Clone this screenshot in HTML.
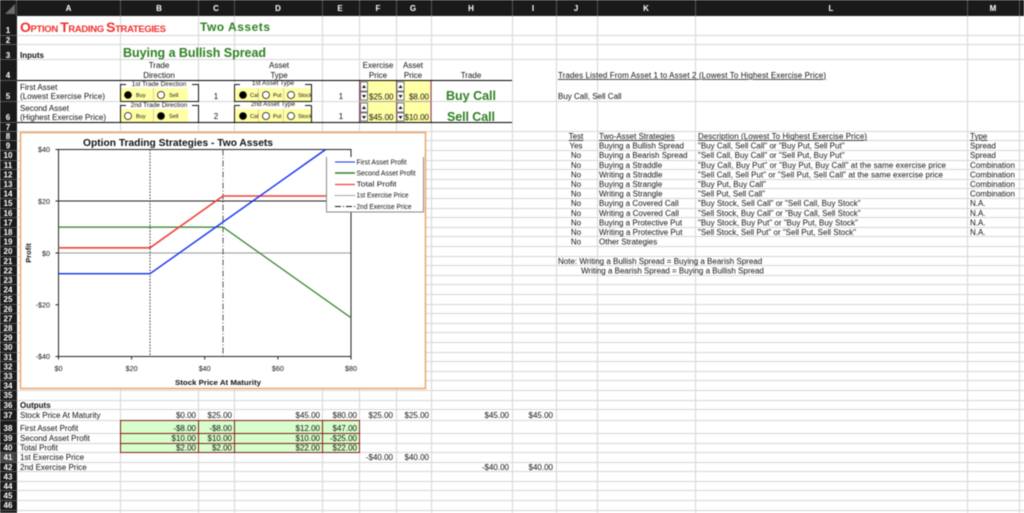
<!DOCTYPE html>
<html><head><meta charset="utf-8">
<style>
html,body{margin:0;padding:0;background:#fff;width:1024px;height:513px;overflow:hidden}
svg{display:block;filter:blur(.4px)}
text{font-family:"Liberation Sans",sans-serif;font-size:8px;fill:#111}
.h text{fill:#fff;font-weight:bold;font-size:8px;text-anchor:middle}
.m text,text.m{text-anchor:middle}
.e text,text.e{text-anchor:end}
.g{fill:#2e8022;font-weight:bold}
.c text{font-size:7.2px}
.s text{font-size:5.6px}
.t text{font-size:6.5px;text-anchor:middle}
.l text{font-size:7px}
</style></head><body>
<svg width="1024" height="513" viewBox="0 0 1024 513" xmlns="http://www.w3.org/2000/svg">
<rect width="1024" height="513" fill="#fff"/>
<path shape-rendering="crispEdges" fill="none" stroke="#d6d6d6" d="M120.5 16V513M198.5 16V513M234.5 16V513M322.5 16V513M359.5 16V513M396.5 16V513M431.5 16V513M512.5 16V513M556.5 16V513M597.5 16V513M695.5 16V513M967.5 16V513M1019.5 16V513
M17 35.5H1024M17 44.5H1024M17 59.5H1024M17 101.5H1024M17 131.5H1024M17 140.5H1024M17 150.5H1024M17 160.5H1024M17 169.5H1024M17 179.5H1024M17 188.5H1024M17 198.5H1024M17 208.5H1024M17 217.5H1024M17 227.5H1024M17 236.5H1024M17 246.5H1024M17 256.5H1024M17 265.5H1024M17 275.5H1024M17 284.5H1024M17 294.5H1024M17 304.5H1024M17 313.5H1024M17 323.5H1024M17 332.5H1024M17 342.5H1024M17 352.5H1024M17 361.5H1024M17 371.5H1024M17 380.5H1024M17 390.5H1024M17 400.5H1024M17 409.5H1024M17 420.5H1024M17 433.5H1024M17 443.5H1024M17 452.5H1024M17 462.5H1024M17 471.5H1024M17 481.5H1024M17 490.5H1024M17 500.5H1024M17 510.5H1024"/>
<!-- sheet headers -->
<rect width="1024" height="16" fill="#1a1a1a"/>
<rect width="17" height="513" fill="#1a1a1a"/>
<rect y="452" width="16" height="10" fill="#444"/>
<path d="M5 14L15 4V14Z" fill="#6a6a6a"/>
<path shape-rendering="crispEdges" fill="none" stroke="#555" d="M16.5 0V16M120.5 0V16M198.5 0V16M234.5 0V16M322.5 0V16M359.5 0V16M396.5 0V16M431.5 0V16M512.5 0V16M556.5 0V16M597.5 0V16M695.5 0V16M967.5 0V16M1019.5 0V16
M0 35.5H17M0 44.5H17M0 59.5H17M0 80.5H17M0 101.5H17M0 122.5H17M0 131.5H17M0 140.5H17M0 150.5H17M0 160.5H17M0 169.5H17M0 179.5H17M0 188.5H17M0 198.5H17M0 208.5H17M0 217.5H17M0 227.5H17M0 236.5H17M0 246.5H17M0 256.5H17M0 265.5H17M0 275.5H17M0 284.5H17M0 294.5H17M0 304.5H17M0 313.5H17M0 323.5H17M0 332.5H17M0 342.5H17M0 352.5H17M0 361.5H17M0 371.5H17M0 380.5H17M0 390.5H17M0 400.5H17M0 409.5H17M0 420.5H17M0 433.5H17M0 443.5H17M0 452.5H17M0 462.5H17M0 471.5H17M0 481.5H17M0 490.5H17M0 500.5H17M0 510.5H17"/>
<g class="h">
<text x="68.5" y="11">A</text><text x="159" y="11">B</text><text x="216" y="11">C</text><text x="278" y="11">D</text><text x="340" y="11">E</text><text x="378" y="11">F</text><text x="413" y="11">G</text><text x="471" y="11">H</text><text x="533" y="11">I</text><text x="576" y="11">J</text><text x="646" y="11">K</text><text x="831" y="11">L</text><text x="993" y="11">M</text>
<text x="8" y="33">1</text><text x="8" y="43">2</text><text x="8" y="58">3</text><text x="8" y="78">4</text><text x="8" y="99">5</text><text x="8" y="120">6</text><text x="8" y="130">7</text>
<text x="8" y="139">8</text><text x="8" y="148.6">9</text><text x="8" y="158.2">10</text><text x="8" y="167.8">11</text><text x="8" y="177.4">12</text><text x="8" y="187">13</text><text x="8" y="196.6">14</text><text x="8" y="206.2">15</text><text x="8" y="215.8">16</text><text x="8" y="225.4">17</text><text x="8" y="235">18</text><text x="8" y="244.6">19</text><text x="8" y="254.2">20</text><text x="8" y="263.8">21</text><text x="8" y="273.4">22</text><text x="8" y="283">23</text><text x="8" y="292.6">24</text><text x="8" y="302.2">25</text><text x="8" y="311.8">26</text><text x="8" y="321.4">27</text><text x="8" y="331">28</text><text x="8" y="340.6">29</text><text x="8" y="350.2">30</text><text x="8" y="359.8">31</text><text x="8" y="369.4">32</text><text x="8" y="379">33</text><text x="8" y="388.6">34</text><text x="8" y="398.2">35</text><text x="8" y="408">36</text><text x="8" y="418">37</text><text x="8" y="431">38</text><text x="8" y="441">39</text><text x="8" y="450.5">40</text><text x="8" y="460">41</text><text x="8" y="470">42</text><text x="8" y="479.5">43</text><text x="8" y="489">44</text><text x="8" y="498.5">45</text><text x="8" y="508">46</text>
</g>
<!-- titles -->
<text x="20" y="32" style="font-weight:bold;fill:#f0302c;font-size:9.5px" textLength="146"><tspan style="font-size:14px">O</tspan>PTION <tspan style="font-size:14px">T</tspan>RADING <tspan style="font-size:14px">S</tspan>TRATEGIES</text>
<text x="200" y="31" class="g" style="font-size:12px" textLength="70">Two Assets</text>
<text x="20" y="58" style="font-weight:bold">Inputs</text>
<text x="123" y="57" class="g" style="font-size:12.5px" textLength="143">Buying a Bullish Spread</text>
<!-- inputs header -->
<g class="m">
<text x="159" y="68">Trade</text><text x="159" y="78">Direction</text>
<text x="279" y="68">Asset</text><text x="279" y="78">Type</text>
<text x="378" y="68">Exercise</text><text x="378" y="78">Price</text>
<text x="413" y="68">Asset</text><text x="413" y="78">Price</text>
<text x="471" y="78">Trade</text>
<text x="216" y="99">1</text><text x="216" y="119">2</text>
<text x="341" y="99">1</text><text x="341" y="119">1</text>
</g>
<text x="20" y="90">First Asset</text>
<text x="20" y="99" textLength="85">(Lowest Exercise Price)</text>
<text x="20" y="111">Second Asset</text>
<text x="20" y="120" textLength="86">(Highest Exercise Price)</text>
<!-- yellow input cells -->
<rect x="359" y="80" width="72" height="42" fill="#ffffa6"/>
<path shape-rendering="crispEdges" fill="none" stroke="#8c3a6a" d="M359.5 80V122M396.5 80V122M431 80V122"/>
<path shape-rendering="crispEdges" fill="none" stroke="#b59ca0" d="M359 101.5H431"/>
<path shape-rendering="crispEdges" fill="#fff" stroke="#777" stroke-width=".6" d="M360.5 82h7v9h-7zM360.5 92h7v8h-7zM360.5 103h7v9h-7zM360.5 113h7v8h-7zM397 82h7v9h-7zM397 92h7v8h-7zM397 103h7v9h-7zM397 113h7v8h-7z"/>
<path fill="#111" d="M362 88l2-3 2 3zM362 95l2 3 2-3zM362 109l2-3 2 3zM362 116l2 3 2-3zM398.5 88l2-3 2 3zM398.5 95l2 3 2-3zM398.5 109l2-3 2 3zM398.5 116l2 3 2-3z"/>
<g class="e"><text x="393.5" y="99.5">$25.00</text><text x="429" y="99.5">$8.00</text><text x="393.5" y="120">$45.00</text><text x="429" y="120">$10.00</text></g>
<text x="471" y="100" class="g m" style="font-size:12.5px" textLength="50">Buy Call</text>
<text x="471" y="121" class="g m" style="font-size:12.5px" textLength="48">Sell Call</text>
<!-- form groups -->
<rect x="121" y="88" width="67" height="13" fill="#ffffa6"/><rect x="121" y="109" width="67" height="13" fill="#ffffa6"/>
<rect x="235" y="88" width="76" height="13" fill="#ffffa6"/><rect x="235" y="109" width="76" height="13" fill="#ffffa6"/>
<path shape-rendering="crispEdges" fill="none" stroke="#e8cfa0" d="M153.5 88V101M153.5 109V122M258.5 88V101M258.5 109V122M283.5 88V101M283.5 109V122"/>
<path shape-rendering="crispEdges" fill="none" stroke="#111" d="M126 84.5H120.5V101.5M192 84.5H198.5V101.5H120.5M126 105.5H120.5V122M192 105.5H198.5V122M234.5 84.5V101.5H311.5V84.5H305M234.5 84.5H240M234.5 105.5V122M311.5 105.5V122M234.5 105.5H240M311.5 105.5H305"/>
<g class="t"><text x="159" y="86">1st Trade Direction</text><text x="159" y="107">2nd Trade Direction</text><text x="273" y="85">1st Asset Type</text><text x="273" y="106">2nd Asset Type</text></g>
<g fill="#fff" stroke="#111" stroke-width=".8">
<circle cx="161" cy="95" r="3.5"/><circle cx="128" cy="116" r="3.5"/><circle cx="266" cy="95" r="3.5"/><circle cx="291" cy="95" r="3.5"/><circle cx="266" cy="116" r="3.5"/><circle cx="291" cy="116" r="3.5"/>
</g>
<g fill="#000"><circle cx="128" cy="95" r="3.8"/><circle cx="161" cy="116" r="3.8"/><circle cx="243" cy="95" r="3.8"/><circle cx="243" cy="116" r="3.8"/></g>
<g class="s">
<text x="136" y="97">Buy</text><text x="169" y="97">Sell</text><text x="136" y="118">Buy</text><text x="169" y="118">Sell</text>
<text x="250" y="97">Cal</text><text x="273" y="97">Put</text><text x="298" y="97">Stock</text>
<text x="250" y="118">Cal</text><text x="273" y="118">Put</text><text x="298" y="118">Stock</text>
</g>
<path shape-rendering="crispEdges" fill="none" stroke="#000" d="M17 80.5H512M17 122.5H512"/>
<!-- right text -->
<text x="558" y="78" text-decoration="underline" textLength="268">Trades Listed From Asset 1 to Asset 2 (Lowest To Highest Exercise Price)</text>
<text x="558" y="99">Buy Call, Sell Call</text>
<g class="m">
<text x="576" y="139" text-decoration="underline">Test</text><text x="576" y="148.6">Yes</text><text x="576" y="158.2">No</text><text x="576" y="167.8">No</text><text x="576" y="177.4">No</text><text x="576" y="187">No</text><text x="576" y="196.6">No</text><text x="576" y="206.2">No</text><text x="576" y="215.8">No</text><text x="576" y="225.4">No</text><text x="576" y="235">No</text><text x="576" y="244.6">No</text>
</g>
<g>
<text x="599" y="139" text-decoration="underline">Two-Asset Strategies</text>
<text x="599" y="148.6">Buying a Bullish Spread</text><text x="599" y="158.2">Buying a Bearish Spread</text><text x="599" y="167.8">Buying a Straddle</text><text x="599" y="177.4">Writing a Straddle</text><text x="599" y="187">Buying a Strangle</text><text x="599" y="196.6">Writing a Strangle</text><text x="599" y="206.2">Buying a Covered Call</text><text x="599" y="215.8">Writing a Covered Call</text><text x="599" y="225.4">Buying a Protective Put</text><text x="599" y="235">Writing a Protective Put</text><text x="599" y="244.6">Other Strategies</text>
<text x="698" y="139" text-decoration="underline" textLength="169">Description (Lowest To Highest Exercise Price)</text>
<text x="698" y="148.6">"Buy Call, Sell Call" or "Buy Put, Sell Put"</text>
<text x="698" y="158.2">"Sell Call, Buy Call" or "Sell Put, Buy Put"</text>
<text x="698" y="167.8" textLength="248">"Buy Call, Buy Put" or "Buy Put, Buy Call" at the same exercise price</text>
<text x="698" y="177.4" textLength="245">"Sell Call, Sell Put" or "Sell Put, Sell Call" at the same exercise price</text>
<text x="698" y="187">"Buy Put, Buy Call"</text>
<text x="698" y="196.6">"Sell Put, Sell Call"</text>
<text x="698" y="206.2">"Buy Stock, Sell Call" or "Sell Call, Buy Stock"</text>
<text x="698" y="215.8">"Sell Stock, Buy Call" or "Buy Call, Sell Stock"</text>
<text x="698" y="225.4">"Buy Stock, Buy Put" or "Buy Put, Buy Stock"</text>
<text x="698" y="235">"Sell Stock, Sell Put" or "Sell Put, Sell Stock"</text>
<text x="970" y="139" text-decoration="underline">Type</text>
<text x="970" y="148.6">Spread</text><text x="970" y="158.2">Spread</text><text x="970" y="167.8">Combination</text><text x="970" y="177.4">Combination</text><text x="970" y="187">Combination</text><text x="970" y="196.6">Combination</text><text x="970" y="206.2">N.A.</text><text x="970" y="215.8">N.A.</text><text x="970" y="225.4">N.A.</text><text x="970" y="235">N.A.</text>
<text x="558" y="263.8">Note: Writing a Bullish Spread = Buying a Bearish Spread</text>
<text x="581" y="273.4">Writing a Bearish Spread = Buying a Bullish Spread</text>
</g>
<!-- chart -->
<rect x="20.5" y="132.5" width="405" height="256" fill="#fff" stroke="#eda568" stroke-width="1.5"/>
<g fill="none" stroke-width="1">
<path d="M58.5 253H351" stroke="#999"/>
<path d="M58.5 201H351" stroke="#222"/>
<path d="M58.5 149.5V356.5H351V149.5H58.5" stroke="#222"/>
<path d="M150 149.5V356.5" stroke="#333" stroke-dasharray="1.5 1.5"/>
<path d="M223 149.5V356.5" stroke="#555" stroke-dasharray="6 2 1 2"/>
<path d="M58.5 149.5h-3M58.5 201h-3M58.5 253h-3M58.5 304.7h-3M58.5 356.5h-3M58.5 356.5v3M131.6 356.5v3M204.7 356.5v3M277.9 356.5v3M351 356.5v3" stroke="#222"/>
<path d="M58.5 227.1H223L351 317.8" stroke="#2e8022" stroke-width="1.2"/>
<path d="M58.5 247.8H150L223 196H351" stroke="#f0403a" stroke-width="1.6"/>
<path d="M58.5 273.7H150L325.6 149.5" stroke="#1030f0" stroke-width="1.4"/>
</g>
<g class="c">
<g class="e"><text x="50" y="152">$40</text><text x="50" y="204">$20</text><text x="50" y="256">$0</text><text x="50" y="307.5">-$20</text><text x="50" y="359">-$40</text></g>
<g class="m"><text x="58.5" y="371">$0</text><text x="131.6" y="371">$20</text><text x="204.7" y="371">$40</text><text x="277.9" y="371">$60</text><text x="351" y="371">$80</text></g>
</g>
<text x="178" y="146" class="m" style="font-size:10.5px;font-weight:bold" textLength="190" lengthAdjust="spacingAndGlyphs">Option Trading Strategies - Two Assets</text>
<text x="218" y="385" class="m" style="font-size:7.5px;font-weight:bold" textLength="86" lengthAdjust="spacingAndGlyphs">Stock Price At Maturity</text>
<text transform="translate(31 253) rotate(-90)" class="m" style="font-size:7.5px;font-weight:bold">Profit</text>
<!-- legend -->
<rect x="326.5" y="157" width="97" height="55" fill="#fff"/>
<path d="M326.5 157V212H423.5V157" fill="none" stroke="#888" stroke-width="1"/>
<g fill="none">
<path d="M335 162H355" stroke="#1030f0" stroke-width="1"/>
<path d="M335 173H355" stroke="#2e8022" stroke-width="1.6"/>
<path d="M335 184.5H355" stroke="#f0403a" stroke-width="1.2"/>
<path d="M335 195.5H355" stroke="#777" stroke-dasharray="1.5 .8" stroke-width="1"/>
<path d="M335 206.5H355" stroke="#111" stroke-dasharray="6 2 1 2" stroke-width="1"/>
</g>
<g class="l">
<text x="356.5" y="164.5" textLength="50" lengthAdjust="spacingAndGlyphs">First Asset Profit</text>
<text x="356.5" y="175.5" textLength="59" lengthAdjust="spacingAndGlyphs">Second Asset Profit</text>
<text x="356.5" y="186.5" textLength="40" lengthAdjust="spacingAndGlyphs">Total Profit</text>
<text x="356.5" y="197.5" textLength="52" lengthAdjust="spacingAndGlyphs">1st Exercise Price</text>
<text x="356.5" y="209" textLength="55" lengthAdjust="spacingAndGlyphs">2nd Exercise Price</text>
</g>
<!-- outputs -->
<text x="20" y="408" style="font-weight:bold">Outputs</text>
<text x="20" y="418">Stock Price At Maturity</text>
<text x="20" y="431">First Asset Profit</text>
<text x="20" y="441">Second Asset Profit</text>
<text x="20" y="450.5">Total Profit</text>
<text x="20" y="460">1st Exercise Price</text>
<text x="20" y="470">2nd Exercise Price</text>
<rect x="120" y="420" width="239" height="32" fill="#d6ffcc"/>
<path shape-rendering="crispEdges" fill="none" stroke="#8a1a1a" d="M120.5 420.5H359.5V452.5H120.5ZM198.5 420V452M234.5 420V452M322.5 420V452M120 433.5H359M120 443.5H359"/>
<g class="e">
<text x="196" y="418">$0.00</text><text x="232" y="418">$25.00</text><text x="320" y="418">$45.00</text><text x="357" y="418">$80.00</text><text x="393" y="418">$25.00</text><text x="429" y="418">$25.00</text><text x="509" y="418">$45.00</text><text x="553" y="418">$45.00</text>
<text x="196" y="431">-$8.00</text><text x="232" y="431">-$8.00</text><text x="320" y="431">$12.00</text><text x="357" y="431">$47.00</text>
<text x="196" y="441">$10.00</text><text x="232" y="441">$10.00</text><text x="320" y="441">$10.00</text><text x="357" y="441">-$25.00</text>
<text x="196" y="450.5">$2.00</text><text x="232" y="450.5">$2.00</text><text x="320" y="450.5">$22.00</text><text x="357" y="450.5">$22.00</text>
<text x="393" y="460">-$40.00</text><text x="429" y="460">$40.00</text>
<text x="509" y="470">-$40.00</text><text x="553" y="470">$40.00</text>
</g>
</svg>
</body></html>
